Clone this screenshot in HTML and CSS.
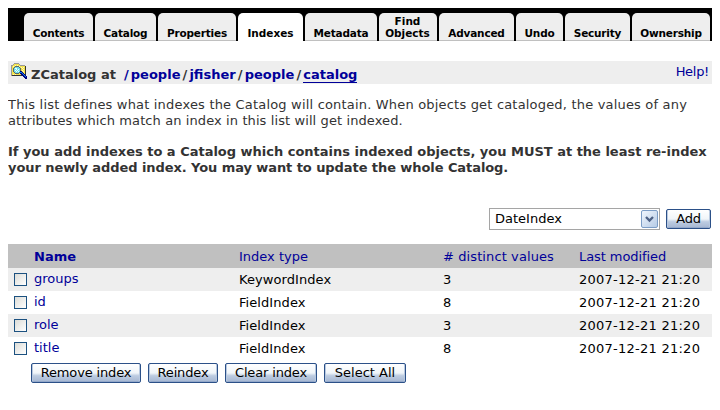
FILE: index.html
```html
<!DOCTYPE html>
<html lang="en">
<head>
<meta charset="utf-8">
<title>ZCatalog Indexes</title>
<link rel="stylesheet" href="styles.css">
</head>
<body>
<nav class="tabs">
  <a class="tab contents"><span>Contents</span></a>
  <a class="tab catalog"><span>Catalog</span></a>
  <a class="tab properties"><span>Properties</span></a>
  <a class="tab indexes active"><span>Indexes</span></a>
  <a class="tab metadata"><span>Metadata</span></a>
  <a class="tab find"><span>Find<br>Objects</span></a>
  <a class="tab advanced"><span>Advanced</span></a>
  <a class="tab undo"><span>Undo</span></a>
  <a class="tab security"><span>Security</span></a>
  <a class="tab ownership"><span>Ownership</span></a>
</nav>
<header class="location">
  <svg class="icon" width="16" height="16" viewBox="0 0 16 16" shape-rendering="crispEdges">
    <path d="M1 2h2V1h5v1h1v1h5v10H1z" fill="#f2e24a"/>
    <path d="M2 3h1v1H2zM4 2h1v1H4zM6 2h1v1H6zM8 3h1v1H8zM10 4h1v1h-1zM12 4h1v1h-1zM11 5h1v1h-1zM11 7h1v1h-1zM12 6h1v1h-1zM12 8h1v1h-1zM2 11h1v1H2zM4 11h1v1H4z" fill="#fff6b8"/>
    <path d="M0 2h2v1H1v10H0zM2 1h1v1H2zM3 0h5v1H3zM8 1h1v1H8zM9 2h5v1H9z" fill="#999"/>
    <path d="M14 3h1v10h-1zM1 12h13v1H1z" fill="#333"/>
    <path d="M4 3h4v1h1v1h1v4H9v1H8v1H4v-1H3V9H2V5h1V4h1z" fill="#58686b"/>
    <path d="M4 4h4v1h1v4H8v1H4V9H3V5h1z" fill="#6fdfe8"/>
    <path d="M4 5h2v1H4zM5 6h1v1H5zM6 7h1v1H6zM4 7h1v1H4zM7 8h1v1H7zM7 6h1v1H7zM5 8h1v1H5z" fill="#e8ffff"/>
    <path d="M9 8h2v1h1v1h1v1h1v1h1v1h1v3h-2v-1h-1v-1h-1v-1h-1v-1h-1v-1H9z" fill="#000080"/>
    <path d="M9 9h2v1h1v1h1v1h1v1h1v1h-1v-1h-1v-1h-1v-1h-1v-1H9z" fill="#1685e8"/>
  </svg>
  <h1><span class="kind">ZCatalog at</span> <span class="path"><a><i class="lead">/</i>people</a><i>/</i><a>jfisher</a><i>/</i><a>people</a><i>/</i><a class="current">catalog</a></span></h1>
  <a class="help">Help!</a>
</header>
<p class="intro"><span class="i1">This list defines what indexes the Catalog will contain. When objects get cataloged, the values of any</span><br><span class="i2">attributes which match an index in this list will get indexed.</span></p>
<p class="notice"><span class="n1">If you add indexes to a Catalog which contains indexed objects, you MUST at the least re-index</span><br><span class="n2">your newly added index. You may want to update the whole Catalog.</span></p>
<div class="add">
  <div class="select"><span>DateIndex</span><i class="arrow"><svg width="9" height="7" viewBox="0 0 9 7"><path d="M1 1l3.500 3.500L8 1" fill="none" stroke="#4d6185" stroke-width="2.300"/></svg></i></div>
  <button class="b-add">Add</button>
</div>
<section class="table">
  <div class="row head"><span></span><b>Name</b><span class="h2">Index type</span><span class="h3"># distinct values</span><span class="h4">Last modified</span></div>
  <div class="row odd"><i class="check"></i><a>groups</a><span class="t">KeywordIndex</span><span>3</span><span class="date">2007-12-21 21:20</span></div>
  <div class="row"><i class="check"></i><a>id</a><span class="t">FieldIndex</span><span>8</span><span class="date">2007-12-21 21:20</span></div>
  <div class="row odd"><i class="check"></i><a>role</a><span class="t">FieldIndex</span><span>3</span><span class="date">2007-12-21 21:20</span></div>
  <div class="row"><i class="check"></i><a>title</a><span class="t">FieldIndex</span><span>8</span><span class="date">2007-12-21 21:20</span></div>
</section>
<div class="actions">
  <button class="b-remove">Remove index</button>
  <button class="b-reindex">Reindex</button>
  <button class="b-clear">Clear index</button>
  <button class="b-all">Select All</button>
</div>
</body>
</html>
```
FILE: styles.css
```css
* { box-sizing: border-box; }
body { margin: 8px; font: 13px/16px Verdana, "DejaVu Sans", sans-serif; color: #333; background: #fff; }
a { color: #000099; text-decoration: none; white-space: nowrap; }
button, span { white-space: nowrap; }

.tabs { display: flex; gap: 2px; height: 33px; padding: 5px 2px 0 16px; background: #000; font-size: 10.5px; letter-spacing: -0.2px; line-height: 12px; font-weight: bold; text-align: center; }
.tab { display: flex; align-items: flex-end; justify-content: center; padding-bottom: 1px; color: #000; background: #eee; border-bottom: 1px solid #c0c0c0; border-radius: 5px 5px 0 0; }
.tab.active { background: #fff; border-color: #fff; letter-spacing: 0; }
.contents { width: 69px; }
.catalog { width: 61px; }
.properties { width: 78px; }
.indexes { width: 65px; }
.metadata { width: 72px; }
.find { width: 58px; letter-spacing: 0; }
.find span { padding-left: 2px; padding-right: 3px; }
.advanced { width: 75px; }
.undo { width: 47px; }
.security { width: 65px; }
.ownership { width: 78px; }

.location { display: flex; height: 23px; margin-top: 20px; padding: 2px 3px 0; background: #eee; }
.icon { flex: none; }
h1 { flex: 1; margin: 4px 0 0 4px; font-size: 13px; line-height: 16px; }
.path { margin-left: 3.5px; }
.path i { padding: 0 2.1px; font-style: normal; }
.path .lead { padding-left: 0; }
.current { border-bottom: 1px solid #000099; }
.help { margin-top: 1px; letter-spacing: -0.3px; }

.intro { margin: 13px 0 0; }
.i1 { letter-spacing: 0.185px; }
.i2 { letter-spacing: 0.1px; }
.notice { margin: 15px 0 0; font-weight: bold; }
.n1 { letter-spacing: -0.01px; }
.n2 { letter-spacing: -0.075px; }

.add { display: flex; justify-content: flex-end; gap: 6px; height: 22px; margin-top: 32px; padding-right: 1px; }
.select { display: flex; justify-content: space-between; align-items: center; width: 171px; padding: 0 1px 0 5px; border: 1px solid #a5a5a5; color: #000; }
.arrow { display: flex; align-items: center; justify-content: center; width: 17px; height: 18px; border: 1px solid #7c9dc6; border-radius: 2px; background: linear-gradient(135deg, #f0f6fd, #b6cbe6); }
button { height: 20px; margin: 0; padding: 0; border: 1px solid #2b5088; border-radius: 2px; background: linear-gradient(#fff, #f0f5f9 50%, #bdcce1 65%, #a5b6d2); box-shadow: inset 1px 0 #b8c9e0, inset -1px 0 #b8c9e0, inset 0 -1px #93a8ca; color: #000; font: 13px/16px Verdana, "DejaVu Sans", sans-serif; letter-spacing: -0.15px; }
.add button { margin-top: 1px; }
.b-add { width: 45px; }

.table { margin-top: 14px; color: #000; }
.row { display: grid; grid-template-columns: 26px 205px 204px 136px 1fr; height: 23px; line-height: 24px; }
.row a { line-height: 22px; }
.odd { background: #eee; }
.head { height: 24px; line-height: 25px; background: #c0c0c0; color: #000099; }
.h3 { letter-spacing: 0.1px; }
.h4 { letter-spacing: -0.08px; }
.t { letter-spacing: 0.07px; }
.date { letter-spacing: 0.25px; }
.check { width: 13px; height: 13px; margin: 5px 0 0 6px; border: 1px solid #1c5180; background: linear-gradient(135deg, #dcdcd7, #fff); }

.actions { display: flex; gap: 7px; margin: 3px 0 0 23px; }
.b-remove { width: 110px; }
.b-reindex { width: 70px; }
.b-clear { width: 92px; }
.b-all { width: 82px; letter-spacing: 0; }
```
